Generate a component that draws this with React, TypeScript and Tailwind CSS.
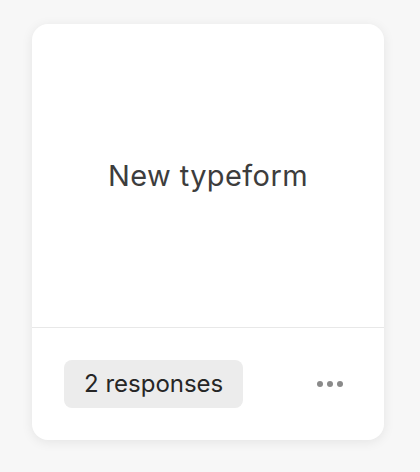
export default function App() {
  return (
    <div className="w-[420px] h-[472px] bg-[#f7f7f7] pt-[24px] pl-[32px]" style={{ fontFamily: "Inter, 'Noto Sans', sans-serif" }}>
      <div className="w-[352px] h-[416px] bg-white rounded-[16px] shadow-[0_2px_12px_rgba(0,0,0,0.08)] flex flex-col overflow-hidden">
        <div className="h-[304px] flex items-center justify-center border-b border-[#e8e8e8]">
          <span className="text-[29px] leading-none text-[#3d3d3d] tracking-[0.4px]">New typeform</span>
        </div>
        <div className="flex-1 flex items-center justify-between pl-[32px] pr-[41px]">
          <div className="h-[48px] px-[20px] rounded-[8px] bg-[#ececec] flex items-center text-[24px] text-[#262626]">2 responses</div>
          <div className="flex gap-[4px]">
            <span className="w-[6px] h-[6px] rounded-full bg-[#8a8a8a]" />
            <span className="w-[6px] h-[6px] rounded-full bg-[#8a8a8a]" />
            <span className="w-[6px] h-[6px] rounded-full bg-[#8a8a8a]" />
          </div>
        </div>
      </div>
    </div>
  );
}
